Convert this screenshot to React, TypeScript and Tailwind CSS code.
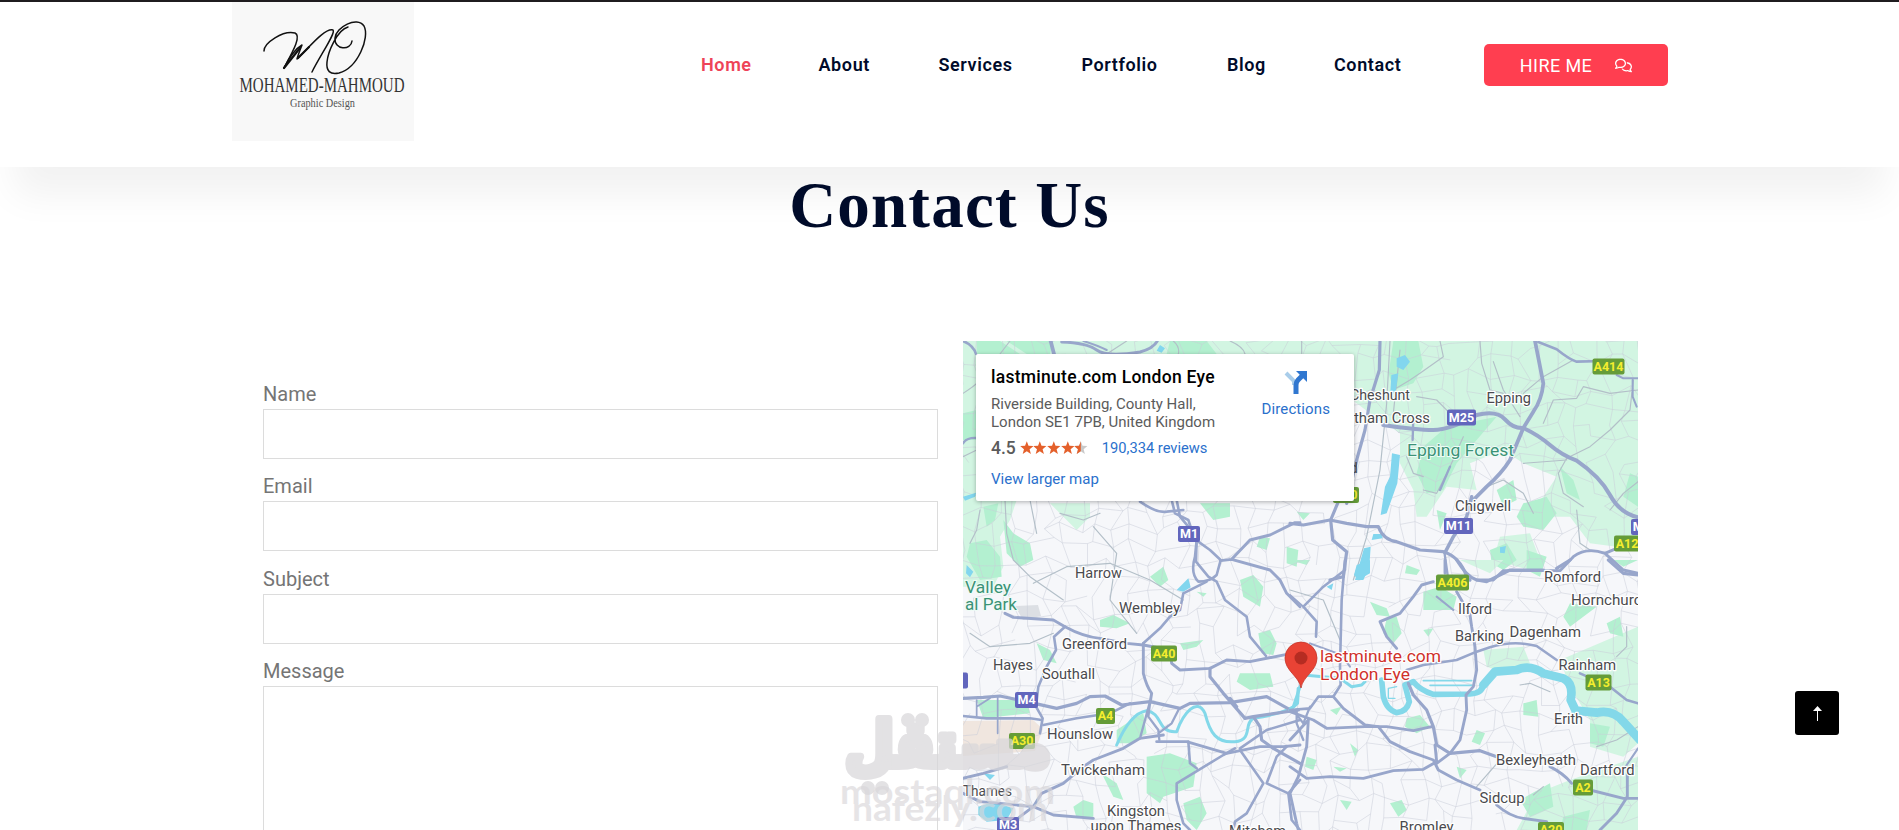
import { FaRegComments } from "react-icons/fa6";

const navLinks = [
  { label: "Home", width: "w-[117.5px]", color: "text-[#ee4358]" },
  { label: "About", width: "w-[120px]", color: "text-[#000b2a]" },
  { label: "Services", width: "w-[143px]", color: "text-[#000b2a]" },
  { label: "Portfolio", width: "w-[145.5px]", color: "text-[#000b2a]" },
  { label: "Blog", width: "w-[107px]", color: "text-[#000b2a]" },
  { label: "Contact", width: "w-[150px]", color: "text-[#000b2a]" },
];

const fields = ["Name", "Email", "Subject"];

type Road = [d: string, width: number];

// The map is drawn in four sheets, each with three units to a pixel.
const sheets: {
  transform: string;
  light: string[];
  parks: string[];
  lanes: string[];
  water: Road[];
  lakes: string[];
  roads: Road[];
}[] = [
  {
    transform: "translate(-23 -11) scale(.33333)",
    light: ["M69 33H1080V80H110V540H69Z"],
    parks: ["M110 33H180L240 72H110Z", "M200 33H340L330 72H260Z", "M690 33H800L830 72H680Z", "M69 250L110 240V330H69Z"],
    lanes: ["M69 190Q100 170 110 160M69 380L110 360M210 33L180 72M560 33L500 72M700 33Q720 50 715 72M870 33Q910 50 915 72"],
    water: [],
    lakes: ["M650 62L660 45L675 55L665 68Z", "M69 500L108 488L105 500L75 512Z"],
    roads: [
      ["M69 33Q100 45 108 72", 9],
      ["M332 33L342 72", 13],
      ["M365 36Q440 38 470 60T600 66Q640 55 652 33", 10],
      ["M430 33Q470 45 500 60", 7],
      ["M69 340Q80 322 110 324", 8],
    ],
  },
  {
    transform: "translate(327 -11) scale(.33333)",
    light: [
      "M0 33H1044V640L980 650L900 640L840 560L700 560L760 500L800 440L700 400L640 360L540 400L560 480L470 470L410 560L380 560L370 480L330 400L330 310L240 250L160 190L180 100L0 80Z",
      "M630 620L720 610L750 690L720 720L610 690Z",
    ],
    parks: [
      "M310 33H385L400 110L370 160L310 180L296 130Z",
      "M400 350L470 290L620 260L560 330L500 400L460 480L410 490L380 430Z",
      "M700 520L770 500L800 550L760 600L700 590L680 560Z",
      "M1020 430L1044 440V530L1000 500Z",
      "M600 660L650 640L680 690L640 720L605 700Z",
      "M710 660L770 680L750 740L710 720Z",
      "M810 410L850 450L870 510L830 490Z",
      "M620 480L670 450L680 510L640 530Z",
      "M20 545L60 550L40 570Z",
      "M440 540L470 550L450 600Z",
    ],
    lanes: [
      "M570 33L575 100L600 180L640 190M450 33L460 80L390 130L360 150L310 180M330 60L310 250M300 33L290 220L270 420L230 620L190 750",
      "M610 95L640 180L690 260M850 90L760 140L700 190M760 280L790 210L860 205L880 170L960 190L1044 180",
      "M830 385L900 350L960 300L1020 240L1030 150M700 400L830 390M590 470L640 450L700 490L730 550",
      "M830 385L805 430L820 490L880 530M1044 455L1000 490L960 540M860 540L870 640L900 660",
      "M520 320L480 410L440 490L400 480M480 250L440 210L380 200M35 33V70M350 380L370 430L400 440",
    ],
    water: [],
    lakes: [
      "M320 85L345 75L360 95L340 120L320 110Z",
      "M304 135L325 130L318 180L300 205Z",
      "M306 370L330 375L322 460L290 550L272 555L285 470L300 440Z",
      "M250 612L275 612L278 625L245 630Z",
      "M222 655L242 650L238 710L220 750H195Z",
      "M630 652L648 648L644 670L630 668Z",
    ],
    roads: [
      ["M270 33L268 120L240 210L225 300L200 390L170 520", 11],
      ["M280 285Q380 300 430 300T560 255Q620 240 645 268T700 294Q745 315 780 345T860 392Q930 440 960 495T1044 562", 14],
      ["M735 33L760 160Q755 210 730 245L700 294L660 390Q635 430 590 470L550 510", 13],
      ["M545 500L530 560L490 620L465 668", 12],
      ["M745 36L800 58Q840 90 860 95L940 93", 9],
      ["M980 135L1000 145H1044M1028 150V200L1040 230", 7],
      ["M0 580L40 585L120 570L170 580L230 590L265 590Q280 630 320 635L390 660L460 665Q510 680 530 740L540 750", 11],
      ["M145 515L122 570L128 630L170 665L160 740L120 750", 11],
      ["M463 665L475 750M370 260L368 330M480 410L450 480", 8],
      ["M560 750H610L640 722H810L850 680Q890 650 945 670L1000 720L1044 730M945 670L980 655", 10],
    ],
  },
  {
    transform: "translate(-13 159) scale(.33333)",
    light: ["M39 0H200L180 60L150 110L160 200L130 260L39 260Z", "M300 10H420V50L380 90L340 50Z"],
    parks: [
      "M60 130L110 120L150 170L155 230L90 240L50 170Z",
      "M160 60L190 100L240 130L250 180L210 200L170 160Z",
      "M100 20L145 10L135 60L110 80Z",
      "M600 230L640 200L655 240L630 260Z",
      "M750 10H840V50L790 60Z",
      "M870 240L910 225L940 260L930 320L880 290Z",
      "M930 110L960 115L950 150L920 140Z",
      "M450 360L490 345L540 370L500 385L450 380Z",
      "M870 520L960 520L970 560L900 570L860 545Z",
      "M925 400L960 390L980 430L970 465L935 460Z",
      "M590 770L660 760L740 790L730 860L640 890L630 910L590 880Z",
      "M500 690L560 650L580 640L590 700L540 730L500 730Z",
      "M700 910L750 890L770 940L740 990L710 960Z",
      "M370 920L400 900L430 910L430 950L380 955Z",
      "M80 600H230L240 640L100 655Z",
      "M1010 140L1045 150L1040 200L1010 190Z",
      "M740 275L770 280L760 290Z",
      "M455 820L500 850L520 900L490 890Z",
      "M260 430L300 450L320 490L280 480Z",
      "M690 430L760 420L740 440L700 450Z",
    ],
    lanes: [
      "M90 30L80 90L60 130M165 0L170 100L190 180L240 230L340 300M330 40L400 60L450 40M240 0L260 100",
      "M250 250L350 200L480 190L600 240L700 300M430 80L500 160L480 300L560 400M60 400L120 440L240 430L310 400",
    ],
    water: [
      ["M500 735Q540 640 590 632C640 640 620 700 680 695C700 640 740 590 765 640C780 700 800 730 855 725C910 720 880 670 910 655Q1000 640 1030 620L1050 560", 9],
    ],
    lakes: ["M680 270L715 235L722 262L700 275Z", "M85 920L130 905L190 925L170 960L110 965L85 945Z", "M50 195L70 215L60 232L48 220Z", "M100 820L135 825L120 840Z"],
    roads: [
      ["M570 5Q620 40 650 35L700 30M665 0L675 40L715 60L725 90M740 120L735 170Q720 220 745 245Q780 245 800 225L812 180L780 150L745 125", 9],
      ["M680 0L690 50L740 110L738 185L775 230L800 245L825 300L890 350L900 410L948 468", 9],
      ["M812 182L845 178L900 120L960 105L1035 68H1050M845 178L960 210L990 240L1010 280L1050 320", 10],
      ["M770 245L700 280L690 330L660 350L630 385L580 430", 9],
      ["M165 340L190 352L310 360L345 380Q400 410 450 415L530 430L580 435L660 450L665 490L690 510L780 505L830 480L900 485L1010 463", 10],
      ["M345 380L312 410L318 450L290 500L265 560L258 620L278 655L270 700", 9],
      ["M580 430V520Q590 560 605 580L600 610", 10],
      ["M39 595L100 592L150 588L230 605L320 625L380 610L420 590L465 588L515 615L600 605L690 625L720 610L840 608L950 590L1030 635", 11],
      ["M39 648L110 655L240 655L275 660M280 675L380 655L480 640L540 610", 9],
      ["M143 590V700M80 600V650M80 620L120 595", 6],
      ["M780 505L780 530L820 580L885 655L910 650L1045 630M840 595L860 620M910 650L930 680L935 720L970 745L1050 790", 11],
      ["M600 605L570 715M600 610L595 650L625 690L628 720M688 625L665 670L625 700", 8],
      ["M39 835L100 820L170 800M250 920L275 880L340 850L400 800L430 780L520 745L570 715L640 705M620 725H710L830 760L930 740H1000L1050 735", 10],
      ["M715 725L720 790L740 805M855 745L820 765L680 850V900L700 970L720 990M870 750L940 850L890 940L855 965L850 990M1010 740L980 770L950 850L1015 880L1025 960L1050 990M870 745L950 690L1050 660M1050 840L1015 880", 9],
      ["M39 880L90 905L150 910L250 920L310 945L430 955M250 920L210 950L190 970", 10],
    ],
  },
  {
    transform: "translate(327 219) scale(.33333)",
    light: [
      "M810 300L1044 200V440L1044 550L1000 590L900 560L900 480L840 380Z",
      "M740 700L840 660L1044 590V810H680Z",
      "M580 270L700 260L720 310L620 330L590 320Z",
      "M510 0H640L600 40Z",
    ],
    parks: [
      "M400 95L450 80L500 110L490 150L400 150Z",
      "M240 125L290 145L300 170L260 165Z",
      "M290 175L320 170L335 220L310 250L280 220Z",
      "M350 475L390 465L420 500L380 520L345 500Z",
      "M300 730L335 720L350 750L325 770Z",
      "M840 130L920 140L880 170L840 200L820 170Z",
      "M950 190L990 170L1000 230L960 220Z",
      "M700 430L740 420L745 470L700 465Z",
      "M560 510L585 520L570 555L545 545Z",
      "M150 720L185 725L170 750Z",
      "M180 550L205 570L195 590Z",
      "M50 590L80 600L70 630L45 620Z",
      "M130 620L170 625L150 635Z",
      "M690 720L780 670L790 740L720 770Z",
      "M820 770L900 750L890 810H810Z",
      "M500 620L530 630L510 655Z",
      "M0 0H60L50 15Z",
      "M350 15L390 30L380 45L345 40Z",
      "M970 0H1044L1000 20Z",
      "M900 490L960 500L940 560L900 550Z",
      "M120 450L155 440L140 465Z",
      "M400 210L430 205L415 230Z",
    ],
    lanes: ["M690 375L720 370L780 395M1010 200V260L980 290M730 705L760 680", "M0 90L100 120L150 240M560 680L630 600M920 560L980 540L1044 500"],
    water: [
      ["M0 450L22 430L25 385", 10],
      ["M40 345L150 355L185 380L215 375L225 365", 9],
      ["M275 360L280 410Q290 450 320 458Q350 455 358 425L345 375L370 365Q390 390 430 403L540 402Q580 400 580 370L615 335L680 330Q720 315 760 340L820 355Q850 370 842 420L855 450L920 460Q970 450 1000 485L1044 535", 17],
      ["M580 375L615 335L680 330Q720 312 760 340L820 355Q852 370 842 420L857 452L920 458Q970 448 1000 485L1050 540", 26],
      ["M400 362H545M420 376H545", 5],
      ["M320 380L295 385V415H315", 4],
    ],
    lakes: ["M200 15L240 0V40L205 60L192 45Z", "M110 80L130 70L125 90Z"],
    roads: [
      ["M165 0L155 120L150 320L152 375L130 410H85L60 445L0 450M165 0V30L100 80L40 140L80 185L78 230", 9],
      ["M0 105L40 140M60 250L155 285L180 320", 7],
      ["M395 75L370 110L330 160L270 185L290 230L320 265M430 65L395 75", 10],
      ["M500 0Q530 50 560 60L590 65L660 30H760M800 25L840 0M955 0L1000 40L1044 45", 11],
      ["M465 0V40M500 95L540 165L545 200L555 260L560 330L550 380L528 405L530 450L510 540L480 580L440 610", 10],
      ["M350 330L400 315L500 300L560 275L600 262Q670 240 740 258L800 300", 9],
      ["M870 340L960 380L1010 420L1044 430", 9],
      ["M355 370L370 405L410 450L430 500L440 555L480 580L570 572L620 590", 11],
      ["M130 410L160 445L225 495L265 500L300 545L360 575L430 600L445 630L500 660L570 690", 10],
      ["M0 455L70 480L110 505L225 500L290 500L370 512L425 500M0 540L55 480L50 560L25 650L0 700L20 790L25 810", 10],
      ["M0 620L50 655L120 650L220 655L310 632L400 628L440 605L435 555", 10],
      ["M10 450L40 490L60 440M20 450V490L40 540", 8],
      ["M620 735Q660 770 700 775L770 785M780 620Q820 640 845 670M900 690L1000 715H1044M1012 640V710L980 760L930 810", 10],
      ["M1044 565L1000 630M440 110L490 150", 7],
    ],
  },
];

type Label = [text: string, x: number, y: number, width: number];

const towns: Label[] = [
  ["Cheshunt", 387, 59, 60],
  ["tham Cross", 391, 82, 76],
  ["Epping", 523.5, 61.5, 44.5],
  ["Chigwell", 492, 170, 56],
  ["Harrow", 112, 237, 47],
  ["Wembley", 156, 271.5, 61],
  ["Greenford", 99, 308, 65],
  ["Hayes", 30, 328.5, 40],
  ["Southall", 79, 338, 53],
  ["Hounslow", 84, 398, 66],
  ["Twickenham", 98, 434, 84],
  ["Thames", 0, 455, 49],
  ["Kingston", 144, 475, 58],
  ["upon Thames", 127.5, 490, 91],
  ["Mitcham", 266, 495, 57],
  ["Romford", 581, 241, 57],
  ["Hornchurch", 608, 264, 79],
  ["Ilford", 495, 272.5, 34],
  ["Barking", 492, 299.5, 49],
  ["Dagenham", 546.5, 296, 71.5],
  ["Rainham", 595.5, 329, 57.5],
  ["Erith", 591, 382.5, 29],
  ["Bexleyheath", 533, 424, 80],
  ["Dartford", 617, 433.5, 54.5],
  ["Sidcup", 516.5, 462, 45],
  ["Bromley", 436.5, 491, 54],
];

const forests: Label[] = [
  ["Epping Forest", 444, 115, 107],
  ["Valley", 2, 252, 46],
  ["al Park", 2, 269, 52],
];

const shields: { name: string; x: number; y: number; w: number; motorway?: boolean }[] = [
  { name: "A414", x: 629.5, y: 17.5, w: 32 },
  { name: "M25", x: 484, y: 68.5, w: 29, motorway: true },
  { name: "M11", x: 481, y: 177, w: 29, motorway: true },
  { name: "M1", x: 215, y: 185, w: 22, motorway: true },
  { name: "M25", x: 668, y: 178, w: 29, motorway: true },
  { name: "A12", x: 651, y: 194.5, w: 26 },
  { name: "A10", x: 370, y: 146, w: 26 },
  { name: "A406", x: 473, y: 233.5, w: 33 },
  { name: "A40", x: 188, y: 304.5, w: 26 },
  { name: "25", x: -20, y: 331.5, w: 25, motorway: true },
  { name: "M4", x: 52, y: 351, w: 23, motorway: true },
  { name: "A4", x: 133, y: 367, w: 19 },
  { name: "A30", x: 46, y: 392, w: 26 },
  { name: "A13", x: 622.5, y: 333.5, w: 26 },
  { name: "A2", x: 610, y: 438.5, w: 20 },
  { name: "A20", x: 575, y: 481, w: 26 },
  { name: "M3", x: 34, y: 476, w: 22, motorway: true },
];

// Crooked side streets, the same on every render.
function buildStreets() {
  let seed = 11;
  const random = () => {
    seed = (seed * 16807) % 2147483647;
    return seed / 2147483647;
  };
  const step = 17;
  const columns = 42;
  const rows = 31;
  const points = Array.from({ length: rows }, (_, r) =>
    Array.from({ length: columns }, (_, c) => [
      (c * step + (random() - 0.5) * 15).toFixed(1),
      (r * step + (random() - 0.5) * 15).toFixed(1),
    ]),
  );
  let d = "";
  for (let r = 0; r < rows; r++) {
    for (let c = 0; c < columns; c++) {
      if (c + 1 < columns && random() > 0.2) d += `M${points[r][c]}L${points[r][c + 1]}`;
      if (r + 1 < rows && random() > 0.2) d += `M${points[r][c]}L${points[r + 1][c]}`;
    }
  }
  return d;
}

const streets = buildStreets();

function Logo() {
  return (
    <svg viewBox="0 0 182 139" className="h-[139px] w-[182px] bg-[#f8f8f8]">
      <g fill="none" stroke="#111" strokeLinecap="round" strokeLinejoin="round" strokeWidth="1.5">
        <path d="M32 49C32 41 51 28 63 31C70 34 60 51 52 66" />
        <path d="M52 66C57 56 63 47 70 43C68 48 66 53 65 57C76 47 92 26 101 28C104 31 89 52 80 70" />
        <path d="M52 66L68 46M66 56L77 45" strokeWidth="2.2" />
        <path d="M116 25C105 28 96 50 95 60C94 69 98 73 107 71C126 66 138 35 132 24C125 14 104 25 103 36C102 48 119 49 120 39" />
      </g>
      <text x="7.5" y="90" fontSize="21.5" textLength="165" lengthAdjust="spacingAndGlyphs" fill="#333" className="font-['Liberation_Serif',serif]">
        MOHAMED-MAHMOUD
      </text>
      <text x="58" y="104.5" fontSize="13" textLength="65" lengthAdjust="spacingAndGlyphs" fill="#555" className="font-['Liberation_Serif',serif]">
        Graphic Design
      </text>
    </svg>
  );
}

function Header() {
  return (
    <header className="relative z-10 flex h-[167px] shrink-0 items-start border-t-2 border-[#1f1c1f] bg-white pl-[232px] shadow-[0_42px_36px_-14px_rgba(0,0,0,0.055)]">
      <Logo />
      <nav className="ml-[287px] mt-[50px] flex text-[18px] leading-[26px] font-semibold tracking-[0.6px]">
        {navLinks.map(({ label, width, color }) => (
          <a key={label} href={`#${label.toLowerCase()}`} className={`${width} ${color}`}>
            {label}
          </a>
        ))}
      </nav>
      <a
        href="#hire"
        className="mt-[42px] flex h-[42px] w-[184px] items-center justify-center gap-[23px] rounded-[5px] bg-[#ff3e50] text-[18px] tracking-[0.4px] text-white"
      >
        HIRE ME
        <FaRegComments className="size-[17px]" />
      </a>
    </header>
  );
}

function ContactForm() {
  return (
    <form className="flex w-[675px] flex-col pt-[36px] text-[20px] text-[#757575]">
      {fields.map((field) => (
        <label key={field} className="mb-[10.4px] block">
          <span className="block h-[32px] leading-[34px]">{field}</span>
          <input className="block h-[50px] w-full border border-[#dcdcdc] bg-white px-3" />
        </label>
      ))}
      <label className="block">
        <span className="block h-[32px] leading-[34px]">Message</span>
        <textarea className="block h-[200px] w-full resize-none border border-[#dcdcdc] bg-white px-3" />
      </label>
    </form>
  );
}

function DirectionsIcon() {
  return (
    <svg viewBox="0 0 24 24" className="size-6">
      <path d="M2 3L10 11V15" fill="none" stroke="#a9cdea" strokeWidth="4" />
      <path d="M12 24V15Q12 12 14 10L18 6" fill="none" stroke="#3077d0" strokeWidth="5" />
      <path d="M12 1H23V12Z" fill="#3077d0" />
    </svg>
  );
}

function Star({ half }: { half?: boolean }) {
  const points = "7,0.2 8.8,5 13.8,5.2 9.9,8.4 11.2,13.4 7,10.6 2.8,13.4 4.1,8.4 0.2,5.2 5.2,5";
  return (
    <svg viewBox="0 0 14 14" className="size-[13.6px]">
      <polygon points={points} fill={half ? "#c9c9c9" : "#e4602b"} />
      {half && <polygon points="7,0.2 7,10.6 2.8,13.4 4.1,8.4 0.2,5.2 5.2,5" fill="#e4602b" />}
    </svg>
  );
}

function PlaceCard() {
  return (
    <div className="absolute left-[13px] top-[13px] flex h-[147px] w-[378px] justify-between rounded-[2px] bg-white pl-[15px] pr-[24px] text-[15px] text-[#2a70cc] shadow-[0_1px_4px_rgba(0,0,0,0.3)]">
      <div>
        <h3 className="mt-[12px] text-[17.5px] leading-[22px] font-medium tracking-[0.27px] text-black">lastminute.com London Eye</h3>
        <p className="mt-[7px] leading-[18px] whitespace-nowrap text-[#5b5b5b]">
          Riverside Building, County Hall,
          <br />
          London SE1 7PB, United Kingdom
        </p>
        <div className="mt-[6px] flex h-[22px] items-center">
          <span className="mr-[4px] text-[17.5px] font-medium text-[#5b5b5b]">4.5</span>
          <Star />
          <Star />
          <Star />
          <Star />
          <Star half />
          <a href="#reviews" className="ml-[14px] pt-[1px] text-[14.7px]">190,334 reviews</a>
        </div>
        <a href="#map" className="mt-[11px] block leading-[18px]">View larger map</a>
      </div>
      <a href="#directions" className="mt-[16px] flex h-[50px] flex-col items-center gap-[5px] leading-[20px] tracking-[0.1px]">
        <DirectionsIcon />
        Directions
      </a>
    </div>
  );
}

function LondonMap() {
  return (
    <div className="relative h-[560px] w-[675px] overflow-hidden">
      <svg viewBox="0 0 675 560" className="block h-[560px] w-[675px] bg-[#f6f7fa]">
        {sheets.map((sheet) => (
          <g key={sheet.transform} transform={sheet.transform}>
            <path d={sheet.light.join("")} fill="#d2f5e2" />
            <path d={sheet.parks.join("")} fill="#b3f0d0" />
          </g>
        ))}
        <path d="M0 380L70 379L80 388L72 410L0 415Z" fill="#f0e6df" />
        <path d="M52 265L75 264L78 275L60 279Z" fill="#dcdfe4" />
        <path d={streets} fill="none" stroke="#c9ccd8" strokeWidth="0.8" opacity="0.65" />
        {sheets.map((sheet) => (
          <g key={sheet.transform} transform={sheet.transform} fill="none" strokeLinecap="round" strokeLinejoin="round">
            <path d={sheet.lanes.join("")} stroke="#b3bfc8" strokeWidth="3.5" />
            <path d={sheet.lakes.join("")} fill="#82d6ee" />
            {sheet.water.map(([d, width]) => (
              <path key={d} d={d} stroke="#83d8e9" strokeWidth={width} />
            ))}
            {sheet.roads.map(([d, width]) => (
              <path key={d} d={d} stroke="#98a6cb" strokeWidth={width * 0.87} />
            ))}
          </g>
        ))}
        {shields.map(({ name, x, y, w, motorway }) => (
          <g key={`${name}-${x}`}>
            <rect x={x} y={y} width={w} height="16" rx="2" fill={motorway ? "#6266bd" : "#659c38"} />
            <text x={x + w / 2} y={y + 12.4} textAnchor="middle" fontSize="12.5" fontWeight="700" fill={motorway ? "#fff" : "#f4ee2e"}>
              {name}
            </text>
          </g>
        ))}
        <g fontSize="14.8" fill="#4a4a4e" stroke="#fff" strokeWidth="2.5" strokeLinejoin="round" paintOrder="stroke">
          {towns.map(([text, x, y, width]) => (
            <text key={text} x={x} y={y} textLength={width} lengthAdjust="spacingAndGlyphs">
              {text}
            </text>
          ))}
        </g>
        <g fontSize="17" fill="#3b9277" stroke="#effcf6" strokeWidth="2" paintOrder="stroke">
          {forests.map(([text, x, y, width]) => (
            <text key={text} x={x} y={y} textLength={width} lengthAdjust="spacingAndGlyphs">
              {text}
            </text>
          ))}
        </g>
        <text x="368" y="132" fontSize="14.8" fill="#4a4a4e">ford</text>
        <path d="M338 347C336 335 322 330 322 317A16 16 0 0 1 354 317C354 330 340 335 338 347Z" fill="#e94335" stroke="#c5362b" strokeWidth="0.8" />
        <circle cx="338" cy="317" r="6.5" fill="#b52c22" />
        <g fontSize="17" fill="#d0312b" stroke="#fff" strokeWidth="2.5" strokeLinejoin="round" paintOrder="stroke">
          <text x="357" y="320.5" textLength="121" lengthAdjust="spacingAndGlyphs">lastminute.com</text>
          <text x="357" y="338.5" textLength="90" lengthAdjust="spacingAndGlyphs">London Eye</text>
        </g>
      </svg>
      <PlaceCard />
    </div>
  );
}

function Watermark() {
  return (
    <svg viewBox="0 0 230 130" className="pointer-events-none absolute left-[835px] top-[700px] h-[130px] w-[230px]">
      <g opacity="0.72" fill="#d9d7da">
        <text
          x="113"
          y="66"
          textAnchor="middle"
          fontSize="62"
          fontWeight="700"
          direction="rtl"
          stroke="#d9d7da"
          strokeWidth="8"
          strokeLinejoin="round"
          textLength="206"
          lengthAdjust="spacingAndGlyphs"
          className="font-['DejaVu_Sans',sans-serif]"
        >
          مستقل
        </text>
        <circle cx="73" cy="20" r="7" />
        <circle cx="87" cy="20" r="7" />
        <circle cx="33" cy="88" r="7" />
        <circle cx="47" cy="88" r="7" />
      </g>
      <g opacity="0.65" fill="#d9d7da" fontSize="34" fontWeight="700" className="font-[Lato,sans-serif]">
        <text x="5" y="104" textLength="215" lengthAdjust="spacingAndGlyphs">mostaql.com</text>
        <text x="17" y="121" textLength="196" lengthAdjust="spacingAndGlyphs">nafezly.com</text>
      </g>
    </svg>
  );
}

export default function App() {
  return (
    <div className="relative flex h-[830px] flex-col overflow-hidden bg-white font-[Roboto,sans-serif]">
      <Header />
      <main className="flex flex-1 flex-col">
        <h1 className="relative z-20 h-[174px] text-center font-['Liberation_Serif',serif] text-[65px] leading-[76px] font-bold tracking-[1.2px] text-[#000b2a]">
          Contact Us
        </h1>
        <div className="flex gap-[25px] pl-[263px]">
          <ContactForm />
          <LondonMap />
        </div>
      </main>
      <Watermark />
      <a href="#top" aria-label="Back to top" className="absolute left-[1795px] top-[691px] flex size-[44px] items-center justify-center rounded-[3px] bg-black">
        <svg viewBox="0 0 9 15" className="h-[15px] w-[9px]">
          <path d="M4.5 0L9 5H0Z" fill="#fff" />
          <path d="M4.5 3V15" stroke="#fff" />
        </svg>
      </a>
    </div>
  );
}
